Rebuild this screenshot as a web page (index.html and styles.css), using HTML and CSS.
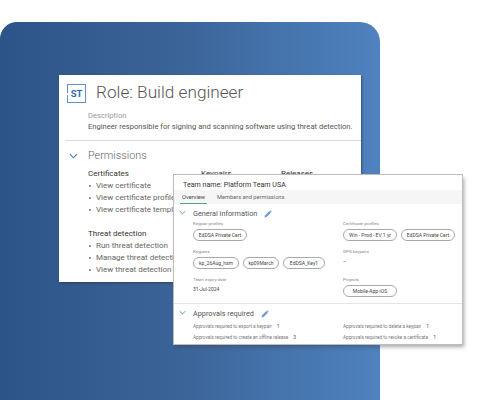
FILE: index.html
```html
<!DOCTYPE html>
<html lang="en">
<head>
<meta charset="utf-8">
<title>Role and team</title>
<link rel="stylesheet" href="styles.css">
</head>
<body>
<div class="panel"></div>

<section class="role">
  <header class="role-head">
    <div class="logo">ST</div>
    <h1 class="role-title">Role: Build engineer</h1>
  </header>
  <div class="desc">
    <div class="desc-label">Description</div>
    <div class="desc-text">Engineer responsible for signing and scanning software using threat detection.</div>
  </div>
  <div class="perm-head">
    <svg class="chev-lg" viewBox="0 0 10 6"><path d="M1 1l4 4 4-4"/></svg>
    <h2 class="perm-title">Permissions</h2>
  </div>
  <div class="perm-cols">
    <div class="perm-col-a">
      <h3 class="perm-group">Certificates</h3>
      <ul class="perm-list">
        <li>View certificate</li>
        <li>View certificate profile</li>
        <li>View certificate template</li>
      </ul>
      <h3 class="perm-group perm-group-next">Threat detection</h3>
      <ul class="perm-list">
        <li>Run threat detection</li>
        <li>Manage threat detection</li>
        <li>View threat detection</li>
      </ul>
    </div>
    <div class="perm-col-b"><h3 class="perm-group">Keypairs</h3></div>
    <div class="perm-col-c"><h3 class="perm-group">Releases</h3></div>
  </div>
</section>

<section class="team">
  <div class="team-name">Team name: Platform Team USA</div>
  <nav class="tabs">
    <span class="tab tab-active">Overview</span>
    <span class="tab">Members and permissions</span>
  </nav>
  <div class="sec-head">
    <svg class="chev-sm" viewBox="0 0 10 6"><path d="M1 1l4 4 4-4"/></svg>
    <span class="sec-title">General information</span>
    <svg class="pen" viewBox="0 0 10 10"><path d="M0.6 9.4l.6-2.6 5.4-5.4 2 2-5.4 5.4z"/><path class="pen-tip" d="M7.2 .8l.5-.4 1.9 1.9-.4.5z"/></svg>
  </div>
  <div class="info-grid">
    <div class="field">
      <div class="label">Keypair profiles</div>
      <div class="chips"><span class="chip chip-w1">EdDSA Private Cert</span></div>
    </div>
    <div class="field">
      <div class="label">Certificate profiles</div>
      <div class="chips"><span class="chip chip-w1">Win - Prod - EV 1 yr</span><span class="chip chip-w2">EdDSA Private Cert</span></div>
    </div>
    <div class="field">
      <div class="label">Keypairs</div>
      <div class="chips"><span class="chip chip-w3">kp_26Aug_hsm</span><span class="chip chip-w4">kp09March</span><span class="chip chip-w5">EdDSA_Key1</span></div>
    </div>
    <div class="field">
      <div class="label">GPG keypairs</div>
      <div class="dash">–</div>
    </div>
    <div class="field">
      <div class="label">Team expiry date</div>
      <div class="value">31-Jul-2024</div>
    </div>
    <div class="field">
      <div class="label">Projects</div>
      <div class="chips"><span class="chip chip-w1">Mobile-App-iOS</span></div>
    </div>
  </div>
  <div class="sec-head sec-head-rule">
    <svg class="chev-sm" viewBox="0 0 10 6"><path d="M1 1l4 4 4-4"/></svg>
    <span class="sec-title">Approvals required</span>
    <svg class="pen" viewBox="0 0 10 10"><path d="M0.6 9.4l.6-2.6 5.4-5.4 2 2-5.4 5.4z"/><path class="pen-tip" d="M7.2 .8l.5-.4 1.9 1.9-.4.5z"/></svg>
  </div>
  <div class="appr-grid">
    <div class="appr">Approvals required to export a keypair<b>1</b></div>
    <div class="appr">Approvals required to delete a keypair<b>1</b></div>
    <div class="appr">Approvals required to create an offline release<b>3</b></div>
    <div class="appr">Approvals required to revoke a certificate<b>1</b></div>
  </div>
</section>
</body>
</html>
```

FILE: styles.css
```css
html, body { margin: 0; padding: 0; }
body {
  position: relative;
  width: 500px;
  height: 400px;
  overflow: hidden;
  background: #fff;
  font-family: Roboto, "Liberation Sans", sans-serif;
  color: #444;
}
h1, h2, h3, ul { margin: 0; padding: 0; font-weight: 400; }

.panel {
  position: absolute;
  left: 0; top: 22px;
  width: 380px; height: 378px;
  border-radius: 17px 20px 0 0;
  background: linear-gradient(90deg, #2c5488 0%, #3a6397 45%, #4f82bf 100%);
}

/* role card */
.role {
  position: absolute;
  left: 59px; top: 75px;
  width: 302px; height: 207px;
  overflow: hidden;
  background: #fff;
  box-shadow: 1px 1px 2px rgba(40, 40, 40, .55);
}
.role-head { display: flex; align-items: center; gap: 10px; height: 34px; padding: 0 0 0 8px; }
.logo {
  position: relative;
  width: 17px; height: 17px;
  margin-top: 2px;
  border: 1px solid #5f92ca;
  color: #2f6cb0;
  font: 700 9.5px/17px "Liberation Sans Narrow", Roboto, sans-serif;
  text-align: center;
}
.logo::before {
  content: "";
  position: absolute;
  left: -1px; top: 8px;
  width: 1px; height: 2px;
  background: #fff;
}
.role-title { font-size: 17.2px; line-height: 24px; font-weight: 300; color: #555; }
.desc { box-sizing: border-box; height: 32px; margin-left: 6px; padding: 1px 0 0 23px; border-bottom: 1px solid #d9d9d9; }
.desc-label { font-size: 7.6px; line-height: 11px; color: #999; }
.desc-text { font-size: 7.6px; line-height: 11px; color: #555; white-space: nowrap; }
.perm-head { display: flex; align-items: center; gap: 10px; height: 29px; padding: 0 0 0 10px; }
.chev-lg { width: 9px; height: 6px; fill: none; stroke: #3f78b8; stroke-width: 1.2; }
.perm-title { font-size: 10.8px; line-height: 15px; color: #666; font-weight: 300; }
.perm-cols { display: grid; grid-template-columns: 113px 80px 1fr; padding: 0 0 0 29px; margin-top: -2px; }
.perm-group { font-size: 8px; line-height: 12px; font-weight: 400; color: #333; white-space: nowrap; }
.perm-group-next { margin-top: 12px; }
.perm-list { list-style: none; }
.perm-list li { font-size: 8px; line-height: 12px; color: #666; white-space: nowrap; padding-left: 8px; position: relative; }
.perm-list li::before { content: ""; position: absolute; left: 1px; top: 5px; width: 2px; height: 2px; border-radius: 50%; background: #777; }

/* team card */
.team {
  position: absolute;
  left: 174px; top: 175px;
  width: 288px; height: 169px;
  background: #fff;
  box-shadow: 0 0 0 1px #bdbdbd, 2px 3px 4px rgba(60, 60, 60, .45);
}
.team-name { font-size: 7.1px; line-height: 10px; height: 15px; padding: 5px 0 0 9px; box-sizing: border-box; color: #333; }
.tabs { display: flex; gap: 8px; height: 14px; background: #f6f6f6; padding-left: 6px; }
.tab { font-size: 5.7px; line-height: 14px; color: #666; padding: 0 2px; }
.tab-active { color: #444; border-bottom: 1px solid #54a878; height: 13px; }
.sec-head { box-sizing: border-box; display: flex; align-items: center; height: 16px; padding: 3px 0 0 5px; }
.sec-head-rule { height: 18px; border-top: 1px solid #e4e4e4; padding-top: 2px; margin-top: -1px; }
.chev-sm { width: 7px; height: 5px; fill: none; stroke: #3f78b8; stroke-width: 1.1; margin-right: 7px; margin-bottom: 3px; }
.sec-title { font-size: 7.3px; line-height: 10px; color: #555; margin-right: 7px; }
.pen { width: 8px; height: 8px; fill: #6b9bd2; }
.pen-tip { fill: #3f78b8; }
.info-grid { display: grid; grid-template-columns: 150px 1fr; padding: 0 0 0 19px; }
.field { height: 28px; }
.label { font-size: 4.4px; line-height: 7px; color: #888; }
.chips { display: flex; gap: 4px; margin-top: 1.5px; }
.chip {
  box-sizing: border-box;
  height: 12px;
  border: 1px solid #aaa;
  border-radius: 6px;
  font-size: 5px;
  line-height: 10px;
  color: #444;
  text-align: center;
  white-space: nowrap;
}
.chip-w1 { width: 54px; }
.chip-w2 { width: 54px; }
.chip-w3 { width: 46px; }
.chip-w4 { width: 36px; }
.chip-w5 { width: 42px; }
.dash { font-size: 5px; line-height: 10px; color: #666; margin-top: 1px; }
.value { font-size: 5px; line-height: 10px; color: #444; margin-top: 1px; }
.appr-grid { display: grid; grid-template-columns: 150px 1fr; padding: 0 0 0 19px; }
.appr { font-size: 4.7px; line-height: 10px; color: #777; white-space: nowrap; }
.appr b { font-size: 5px; font-weight: 400; color: #555; margin-left: 5px; }
```
